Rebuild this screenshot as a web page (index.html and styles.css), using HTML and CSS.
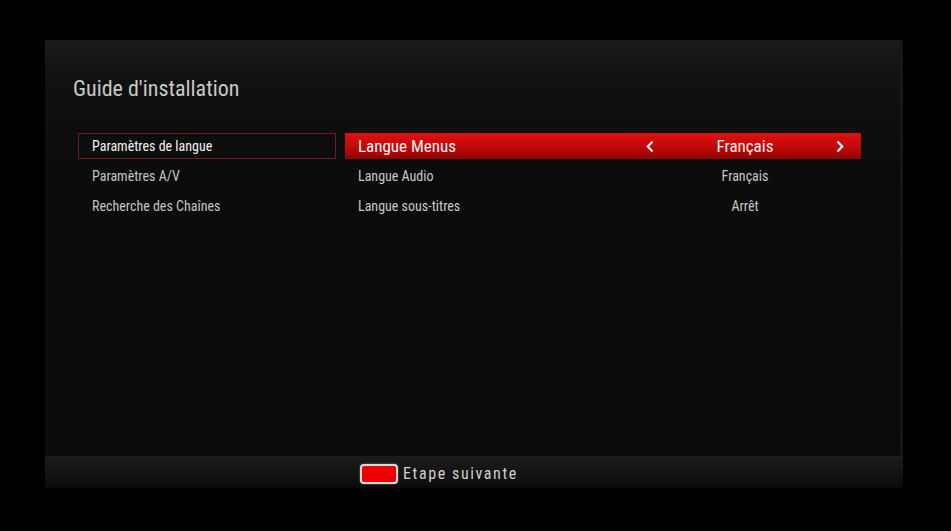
FILE: index.html
```html
<!DOCTYPE html>
<html lang="fr">
<head>
    <meta charset="UTF-8">
    <title>Guide d'installation</title>
    <link rel="stylesheet" href="styles.css">
</head>
<body>

    <div class="screen">
        <div class="panel">
            <h1 class="title">Guide d'installation</h1>
            <div class="content">
                <ul class="nav">
                    <li class="nav-item active">Paramètres de langue</li>
                    <li class="nav-item">Paramètres A/V</li>
                    <li class="nav-item">Recherche des Chaînes</li>
                </ul>
                <div class="options">
                    <div class="option selected">
                        <span class="option-label">Langue Menus</span>
                        <span class="arrow">
                            <svg width="8" height="13" viewBox="0 0 8 13"><polyline points="6.5,1.5 1.8,6.5 6.5,11.5" fill="none" stroke="#f0f0f0" stroke-width="2.2"/></svg>
                        </span>
                        <span class="option-value">Français</span>
                        <span class="arrow">
                            <svg width="8" height="13" viewBox="0 0 8 13"><polyline points="1.5,1.5 6.2,6.5 1.5,11.5" fill="none" stroke="#f0f0f0" stroke-width="2.2"/></svg>
                        </span>
                    </div>
                    <div class="option">
                        <span class="option-label">Langue Audio</span>
                        <span class="arrow"></span>
                        <span class="option-value">Français</span>
                        <span class="arrow"></span>
                    </div>
                    <div class="option">
                        <span class="option-label">Langue sous-titres</span>
                        <span class="arrow"></span>
                        <span class="option-value">Arrêt</span>
                        <span class="arrow"></span>
                    </div>
                </div>
            </div>
        </div>
        <div class="footer">
            <span class="key-red"></span>
            <span class="footer-text">Etape suivante</span>
        </div>
    </div>

</body>
</html>
```

FILE: styles.css
```css
body {
    margin: 0;
    background: #000;
    font-family: 'Roboto Condensed', 'Liberation Sans', sans-serif;
    width: 951px;
    height: 531px;
    overflow: hidden;
}
.screen {
    margin: 40px 0 0 45px;
    width: 858px;
}
.panel {
    height: 416px;
    background: linear-gradient(to bottom, #1b1b1b 0px, #111 40px, #0c0c0c 120px, #0b0b0b 100%);
    border-right: 3px solid #171717;
    box-sizing: border-box;
    padding: 36px 0 0 28px;
}
.title {
    margin: 0;
    font-weight: normal;
    font-size: 22px;
    color: #c9c9c9;
    line-height: 26px;
}
.content {
    display: flex;
    gap: 9px;
    margin: 31px 0 0 5px;
}
.nav {
    list-style: none;
    margin: 0;
    padding: 0;
    width: 258px;
    display: flex;
    flex-direction: column;
    gap: 4px;
}
.nav-item {
    height: 26px;
    line-height: 24px;
    padding-left: 13px;
    font-size: 14px;
    color: #c4c4c4;
    box-sizing: border-box;
    border: 1px solid transparent;
}
.nav-item.active {
    border-color: #6a1c1f;
    color: #f2f2f2;
}
.options {
    width: 516px;
    display: flex;
    flex-direction: column;
    gap: 4px;
}
.option {
    height: 26px;
    display: grid;
    grid-template-columns: 1fr 20px 170px 20px;
    align-items: center;
    padding: 0 11px 0 13px;
    font-size: 14px;
    color: #c8c8c8;
}
.option.selected {
    background: linear-gradient(to bottom, #e01010 0%, #c80a0a 45%, #a80606 80%, #8a0404 100%);
    font-size: 17px;
    color: #f4f4f4;
}
.option-value {
    text-align: center;
}
.arrow {
    display: flex;
    justify-content: center;
    align-items: center;
}
.footer {
    height: 32px;
    background: linear-gradient(to bottom, #1c1c1c 0%, #141414 50%, #0a0a0a 100%);
    display: flex;
    align-items: center;
    padding-left: 315px;
    gap: 5px;
}
.key-red {
    width: 34px;
    height: 16px;
    background: #ee0000;
    border: 2px solid #d8d8d8;
    border-radius: 4px;
    box-shadow: 0 0 2px #888;
    margin-top: 4px;
}
.footer-text {
    font-size: 16px;
    letter-spacing: 1.6px;
    color: #d0d0d0;
    margin-top: 2px;
}
```
